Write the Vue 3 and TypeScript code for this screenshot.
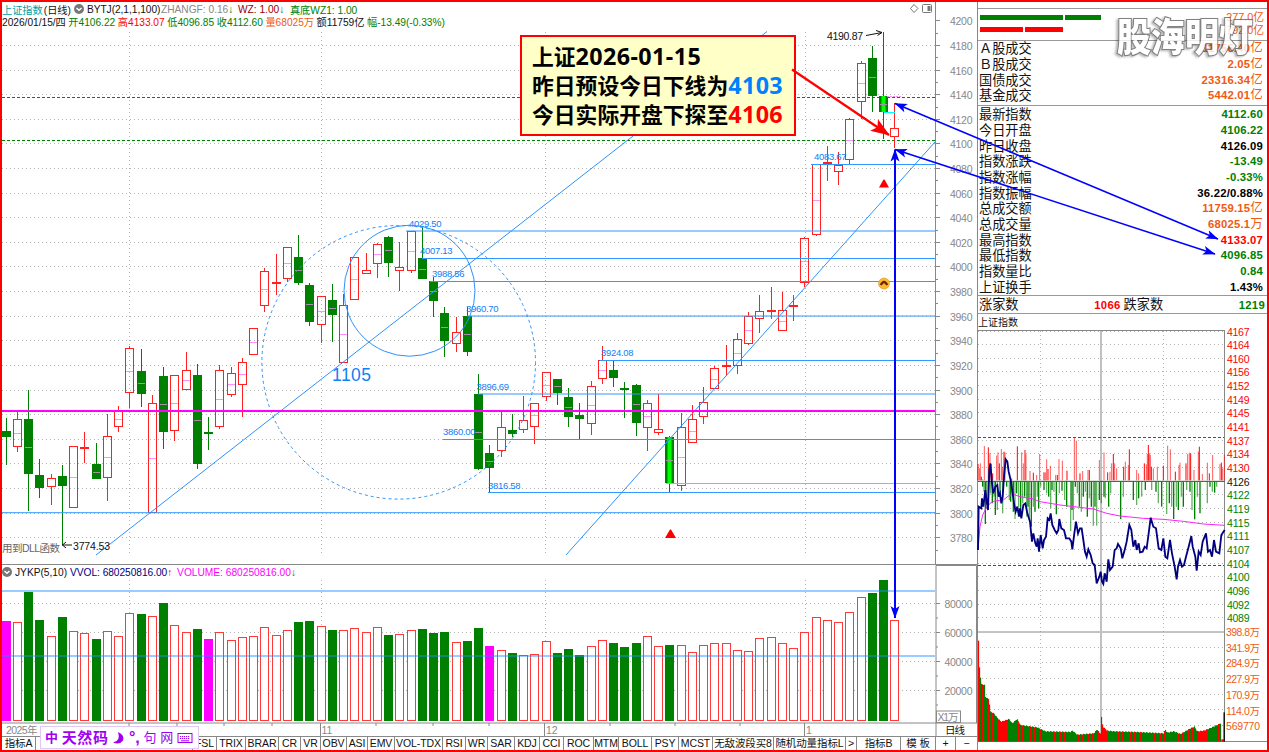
<template>
  <div class="terminal">
    <main class="left-pane">
      <header class="chart-head">
        <div class="head-line first">
          <span class="teal">上证指数</span>
          <span class="day">(日线)</span>
          <span class="round-btn"><svg viewBox="0 0 10 10"><path d="M2.5 4 5 6.3 7.5 4" /></svg></span>
          <span class="formula">BYTJ(2,1,1,100)</span>
          <span class="gray zf">ZHANGF: 0.16<b class="green">↓</b></span>
          <span class="wine wz">WZ: 1.00<b class="green">↓</b></span>
          <span class="green">真底WZ1: 1.00</span>
          <span class="head-icons">
            <svg width="22" height="12" viewBox="0 0 22 12">
              <path d="M4 1.5 8 5.5 4 9.5 0.5 5.5Z" />
              <rect x="12.5" y="1.5" width="9" height="8" rx="1" />
              <rect x="18" y="3.5" width="2" height="4" fill="#777" />
            </svg>
          </span>
        </div>
        <div class="head-line second">
          <span>2026/01/15/四</span>
          <span class="green">开4106.22</span>
          <span class="red">高4133.07</span>
          <span class="green">低4096.85</span>
          <span class="green">收4112.60</span>
          <span class="orange">量68025万</span>
          <span>额11759亿</span>
          <span class="green">幅-13.49(-0.33%)</span>
        </div>
      </header>

      <!-- K线主图 -->
      <svg class="k-chart" width="975" height="536" viewBox="2 28 975 536">
        <g class="grid">
          <line v-for="p in gridPrices.slice(1)" :key="p" x1="2" x2="935" :y1="priceY(p)" :y2="priceY(p)" />
          <line v-for="m in months" :key="m" :x1="m" :x2="m" y1="32" y2="556" />
        </g>
        <line x1="2" x2="935" y1="97.5" y2="97.5" class="dash purple-line" />
        <line x1="2" x2="935" y1="140.5" y2="140.5" class="dash green-line" />
        <g v-for="(c, i) in candles" :key="i" class="candle" :class="c[4]">
          <line :x1="cx(i)" :x2="cx(i)" :y1="c[0]" :y2="c[1]" />
          <line :x1="cx(i)" :x2="cx(i)" :y1="c[2]" :y2="c[3]" />
          <rect :x="cx(i) - 4" :y="Math.round(c[1]) + 0.5" width="8" :height="Math.max(1, Math.round(c[2] - c[1]) - 1)" />
          <rect
            v-if="c[4] === 'b'"
            class="bright"
            :x="cx(i) - 2"
            :y="c[1]"
            width="4"
            :height="c[2] - c[1]"
          />
          <line
            v-if="c[2] - c[1] > 13"
            class="mid"
            :x1="cx(i) - 3.5"
            :x2="cx(i) + 3.5"
            :y1="Math.round((c[1] + c[2]) / 2) + 0.5"
            :y2="Math.round((c[1] + c[2]) / 2) + 0.5"
          />
        </g>
        <line x1="666" x2="935" y1="483.5" y2="483.5" stroke="#b0b0b0" />
        <g class="level">
          <line v-for="l in levels" :key="l.y" :x1="l.from" x2="935" :y1="l.y" :y2="l.y" />
        </g>
        <g class="level-text">
          <text v-for="t in levelTexts" :key="t.s" :x="t.x" :y="t.y" textLength="32.5">{{ t.s }}</text>
          <text x="332" y="380.5" class="big" textLength="39">1105</text>
        </g>
        <g class="trend">
          <circle cx="409.5" cy="290.7" r="65.5" />
          <circle cx="398.7" cy="362.3" r="136.8" stroke-dasharray="3 3" />
          <line x1="96" y1="555" x2="767" y2="31.5" />
          <line x1="566" y1="555" x2="935" y2="142" />
        </g>
        <line x1="2" x2="935" y1="411" y2="411" stroke="#f0f" stroke-width="2" />
        <line x1="884" x2="895" y1="112.5" y2="112.5" stroke="#0ff" />
        <line x1="887" x2="901" y1="96.5" y2="96.5" stroke="#f8f" stroke-dasharray="2 1" />
        <path d="M665 538 670 529.5H671L676 538Z M879 187.5 883.5 179.5H884.5L889 187.5Z" fill="red" />
        <circle cx="884" cy="283.5" r="5.5" fill="#fdb92c" stroke="#e39419" stroke-width=".6" />
        <path d="M879.8 284.5Q884 277 888.2 284.5L886.5 285.5 884 283 881.5 285.5Z" fill="#6b2500" />
        <g class="mark-text">
          <text x="827" y="40" textLength="36">4190.87</text>
          <path d="M866 35.5 882 32.5M876 30.5 882 32.5 877.5 35.5" />
          <text x="73" y="549.5" textLength="37">3774.53</text>
          <path d="M72 545H62M66 542 62.5 545 66 548" />
          <text x="2" y="551.5" textLength="58" class="dll">用到DLL函数</text>
        </g>
        <g class="axis">
          <line x1="935.5" x2="935.5" y1="28" y2="564" />
          <template v-for="p in gridPrices" :key="p">
            <line x1="936" x2="940" :y1="priceY(p)" :y2="priceY(p)" />
            <line x1="936" x2="938" :y1="priceY(p - 10)" :y2="priceY(p - 10)" />
            <text x="950" :y="priceY(p) + 4" textLength="22.5">{{ p }}</text>
          </template>
        </g>
      </svg>

      <header class="vol-head">
        <span class="round-btn"><svg viewBox="0 0 10 10"><path d="M2.5 4 5 6.3 7.5 4" /></svg></span>
        <span>JYKP(5,10)</span>
        <span class="navy">VVOL: 680250816.00<b class="red">↑</b></span>
        <span class="magenta">VOLUME: 680250816.00<b class="green">↓</b></span>
      </header>

      <!-- 成交量 -->
      <svg class="vol-chart" width="975" height="157" viewBox="2 579 975 157">
        <g class="grid">
          <line v-for="y in [603.5, 632.5, 661.5, 690.5]" :key="y" x1="2" x2="935" :y1="y" :y2="y" />
          <line v-for="m in months" :key="m" :x1="m" :x2="m" y1="580" y2="720" />
        </g>
        <rect
          v-for="(v, i) in volumes"
          :key="i"
          class="vol"
          :class="v[1]"
          :x="cx(i) - 4"
          :y="Math.round(v[0]) + 0.5"
          width="8"
          :height="720 - Math.round(v[0])"
        />
        <line v-for="y in [591, 656]" :key="y" x1="2" x2="935" :y1="y" :y2="y" class="vol-level" />
        <g class="axis">
          <path d="M936 736V565.5H976.5V723" />
          <line x1="2" x2="977" y1="723" y2="723" />
          <template v-for="(n, i) in [80000, 60000, 40000, 20000]" :key="n">
            <line x1="936" x2="940" :y1="603.5 + i * 29" :y2="603.5 + i * 29" />
            <line x1="936" x2="938" :y1="618 + i * 29" :y2="618 + i * 29" />
            <text x="944.5" :y="607.5 + i * 29" textLength="28">{{ n }}</text>
          </template>
          <rect x="936.5" y="711" width="24" height="11.5" fill="none" />
          <text x="937.5" y="720.5" textLength="21">X1万</text>
          <line v-for="x in [129, 320.5, 544.5, 804.5]" :key="x" :x1="x" :x2="x" y1="723" y2="736" />
          <line v-for="x in [177, 224, 272, 376, 433, 489, 610, 675, 740]" :key="x" :x1="x" :x2="x" y1="723" y2="726" />
          <text x="6" y="733.5" textLength="31.5">2025年</text>
          <text x="131" y="733.5">10</text>
          <text x="321.5" y="733.5">11</text>
          <text x="546" y="733.5">12</text>
          <text x="806" y="733.5">1</text>
          <text x="945" y="733.5" textLength="20" fill="#111">日线</text>
        </g>
      </svg>

      <nav class="tabs">
        <span v-for="(t, i) in tabs" :key="i" :class="{ last: i === tabs.length - 1 }">{{ t }}</span>
      </nav>

      <div class="ime">
        <span>中</span>
        <span class="wide">天然码</span>
        <svg width="13" height="14" viewBox="0 0 13 14"><path d="M6 1Q13 4 11 9.5 8 14 1 11.5 9 10 6 1Z" /></svg>
        <span class="punct">°,</span>
        <span class="small">句</span>
        <span class="small">网</span>
        <svg width="16" height="12" viewBox="0 0 16 12">
          <rect x="1" y="1.5" width="14" height="9" fill="none" stroke="#a000f0" />
          <path d="M3 4.5H13M3 6.5H13" fill="none" stroke="#a000f0" stroke-dasharray="1.2 .8" />
          <path d="M4 8.8H12" stroke="#a000f0" />
        </svg>
      </div>
    </main>

    <aside class="quote">
      <div class="flow">
        <div class="flow-row">
          <i class="bar g1"></i><i class="bar g2"></i><span class="orange">277.0亿</span>
        </div>
        <div class="flow-row">
          <i class="bar r1"></i><i class="bar r2"></i><span class="orange">792.0亿</span>
        </div>
      </div>
      <div class="rows turnover">
        <div v-for="r in turnover" :key="r.label" class="row">
          <span>{{ r.label }}</span>
          <b class="orange">{{ r.value }}<em>亿</em></b>
        </div>
      </div>
      <div class="rows index">
        <div v-for="r in indexRows" :key="r.label" class="row">
          <span>{{ r.label }}</span>
          <b :class="r.color">{{ r.value }}<em v-if="r.unit">{{ r.unit }}</em></b>
        </div>
      </div>
      <div class="counts">
        <span>涨家数</span><b class="red">1066</b><span>跌家数</span><b class="green">1219</b>
      </div>
      <div class="mini-title">上证指数</div>

      <!-- 分时图 -->
      <svg class="mini" width="289" height="420" viewBox="978 330 289 420">
        <g class="grid">
          <line v-for="(p, i) in miniPrices" :key="p" x1="978" x2="1224" :y1="miniY(i)" :y2="miniY(i)" />
          <line v-for="y in [647, 662, 678, 694, 709, 725]" :key="y" x1="978" x2="1224" :y1="y + 0.5" :y2="y + 0.5" />
          <line x1="1040" x2="1040" y1="331" y2="741" />
          <line x1="1163.5" x2="1163.5" y1="331" y2="741" />
        </g>
        <g class="axis">
          <line x1="978" x2="1225" y1="330.5" y2="330.5" />
          <line x1="1224.5" x2="1224.5" y1="331" y2="742" />
          <line x1="978" x2="1225" y1="632" y2="632" />
          <line x1="978" x2="1267" y1="741.5" y2="741.5" />
        </g>
        <line x1="1101" x2="1101" y1="331" y2="741" stroke="#c0c0c0" stroke-width="2" />
        <line x1="978" x2="1224" y1="437.5" y2="437.5" class="dash purple-line" />
        <line x1="978" x2="1224" y1="565.5" y2="565.5" class="dash green-line" />
        <g transform="translate(970 320) scale(.33333)">
          <line
            v-for="(b, i) in upBars"
            :key="i"
            :x1="b[0]"
            :x2="b[0]"
            :y1="b[1]"
            y2="481"
            stroke="red"
            :stroke-opacity="i % 3 ? 0.65 : 1"
            stroke-width="3"
          />
          <line
            v-for="(b, i) in downBars"
            :key="i"
            :x1="b[0]"
            :x2="b[0]"
            y1="485"
            :y2="b[1]"
            stroke="green"
            :stroke-opacity="i % 2 ? 0.6 : 1"
            stroke-width="4"
          />
          <line x1="24" x2="764" y1="484" y2="484" stroke="#444" stroke-width="3" />
          <polyline class="avg" :points="avgLine" />
          <polyline class="price" :points="priceLine" />
        </g>
        <g transform="translate(970 570) scale(.33333)">
          <rect v-for="b in miniVolumes" :key="b.x" :x="b.x" :y="b.y" width="3.4" :height="515 - b.y" :fill="b.c" />
          <rect x="754" y="508" width="7" height="7" fill="red" />
          <rect x="760.5" y="427" width="4" height="88" fill="#000" />
        </g>
        <g class="mini-axis">
          <text
            v-for="(p, i) in miniPrices"
            :key="p"
            x="1227"
            :y="miniY(i) + 4"
            textLength="22.5"
            :class="i < 11 ? 'up' : i > 11 ? 'down' : 'flat'"
          >{{ p }}</text>
          <text
            v-for="(v, i) in ['398.8万', '341.9万', '284.9万', '227.9万', '170.9万', '114.0万', '569770']"
            :key="v"
            x="1226"
            :y="636 + i * 15.7"
            textLength="34"
            class="amt"
          >{{ v }}</text>
        </g>
      </svg>
      <div class="watermark">股海明灯</div>
    </aside>

    <div class="note">
      <div>上证<i>2026-01-15</i></div>
      <div>昨日预设今日下线为<i class="blue">4103</i></div>
      <div>今日实际开盘下探至<i class="red">4106</i></div>
    </div>

    <svg class="arrows" width="1269" height="752" viewBox="0 0 1269 752">
      <defs>
        <marker id="blueHead" markerUnits="userSpaceOnUse" markerWidth="14" markerHeight="10" refX="12" refY="5" orient="auto-start-reverse">
          <path d="M0 .5 12.5 5 0 9.5 3 5Z" fill="#00f" />
        </marker>
        <marker id="redHead" markerUnits="userSpaceOnUse" markerWidth="20" markerHeight="14" refX="18" refY="7" orient="auto">
          <path d="M0 0 19 7 0 14 4 7Z" fill="red" />
        </marker>
      </defs>
      <line x1="792" y1="69.5" x2="889" y2="135" stroke="red" stroke-width="2.2" marker-end="url(#redHead)" />
      <g stroke="#00f" stroke-width="1.6">
        <line x1="895" y1="103.5" x2="1218" y2="239" marker-start="url(#blueHead)" marker-end="url(#blueHead)" />
        <line x1="895" y1="149.5" x2="1215" y2="254" marker-start="url(#blueHead)" marker-end="url(#blueHead)" />
        <line x1="895" y1="149.5" x2="895" y2="618" stroke-width="2" marker-start="url(#blueHead)" marker-end="url(#blueHead)" />
      </g>
    </svg>
  </div>
</template>

<script setup lang="ts">
type Candle = [number, number, number, number, string]

const gridPrices = Array.from({ length: 22 }, (_, i) => 4200 - i * 20)
const months = [129.5, 321.5, 545.5, 805.5]

const cx = (i: number) => Math.floor(6 + i * 11.253) + 0.5
const priceY = (p: number) => Math.floor(45.5 + (4180 - p) * 1.2305) + 0.5

// 最高, 实体上沿, 实体下沿, 最低, 颜色 (r 阳线, g 阴线, b 高亮阴线)
const candles: Candle[] = [
  [418, 431, 437, 465, 'g'], [412, 419, 447, 452, 'r'], [390, 419, 474, 511, 'g'], [459, 475, 488, 498, 'g'],
  [474, 478, 487, 505, 'r'], [465, 476, 486, 545, 'g'], [446, 446, 508, 508, 'r'], [432, 447, 449, 463, 'r'],
  [443, 464, 479, 479, 'g'], [414, 436, 478, 501, 'r'], [406, 411, 427, 432, 'r'], [346, 348, 393, 408, 'r'],
  [349, 371, 394, 407, 'g'], [395, 403, 513, 513, 'r'], [367, 376, 432, 449, 'g'], [375, 375, 431, 441, 'r'],
  [352, 370, 390, 390, 'r'], [364, 375, 464, 469, 'g'], [417, 432, 434, 450, 'g'], [365, 370, 427, 429, 'r'],
  [367, 373, 395, 397, 'r'], [358, 362, 385, 417, 'r'], [328, 328, 355, 355, 'r'], [268, 271, 306, 312, 'r'],
  [254, 282, 284, 295, 'r'], [247, 247, 279, 282, 'r'], [235, 257, 283, 285, 'g'], [283, 285, 322, 326, 'g'],
  [296, 296, 325, 343, 'r'], [284, 300, 315, 342, 'g'], [294, 305, 363, 363, 'r'], [257, 257, 300, 300, 'r'],
  [253, 270, 274, 274, 'r'], [243, 244, 264, 278, 'r'], [236, 237, 263, 277, 'g'], [242, 267, 271, 291, 'r'],
  [231, 231, 271, 273, 'r'], [226, 258, 279, 279, 'g'], [277, 281, 301, 317, 'g'], [307, 313, 341, 357, 'g'],
  [317, 332, 344, 352, 'r'], [307, 316, 352, 356, 'g'], [374, 394, 469, 470, 'g'], [445, 453, 468, 493, 'g'],
  [412, 427, 451, 457, 'r'], [414, 430, 434, 437, 'g'], [396, 420, 430, 433, 'r'], [403, 403, 427, 444, 'r'],
  [372, 372, 397, 401, 'r'], [379, 379, 393, 405, 'g'], [388, 397, 417, 427, 'g'], [403, 415, 419, 439, 'g'],
  [381, 386, 424, 435, 'r'], [346, 360, 379, 384, 'r'], [360, 370, 378, 387, 'g'], [382, 388, 389, 418, 'g'],
  [384, 385, 423, 436, 'g'], [400, 403, 428, 451, 'r'], [394, 429, 433, 435, 'r'], [436, 437, 483, 492, 'b'],
  [413, 427, 486, 491, 'r'], [405, 419, 443, 443, 'r'], [387, 402, 417, 424, 'r'], [366, 368, 389, 389, 'r'],
  [345, 365, 367, 376, 'r'], [333, 339, 366, 374, 'r'], [312, 316, 344, 345, 'r'], [295, 311, 319, 333, 'r'],
  [287, 310, 311, 319, 'r'], [292, 310, 331, 331, 'r'], [295, 305, 306, 321, 'r'], [237, 238, 283, 287, 'r'],
  [164, 164, 235, 236, 'r'], [146, 162, 164, 181, 'r'], [152, 165, 172, 185, 'r'], [118, 119, 160, 164, 'r'],
  [61, 63, 102, 119, 'r'], [46, 58, 96, 112, 'g'], [32, 96, 112, 139, 'b'], [103, 128, 137, 148, 'r'],
]

const volumeTops = [
  621, 622, 592, 620, 636, 617, 631, 633, 639, 631, 636, 613, 614, 616, 603, 625, 632, 629, 639, 632,
  640, 637, 636, 627, 635, 630, 622, 621, 626, 630, 630, 628, 632, 627, 635, 634, 630, 629, 633, 632,
  642, 641, 628, 646, 650, 653, 655, 654, 641, 653, 649, 655, 646, 640, 643, 647, 643, 636, 646, 645,
  645, 652, 645, 643, 643, 650, 651, 638, 637, 643, 648, 632, 617, 620, 622, 612, 597, 593, 580, 620,
]
const volumeKinds = 'mrggrgrrgrrrgrgrrgmrrrrrrrggrgrrrrgrrggg' + 'rggmrgrrrgggrrgggrrgrrrrrrrrrrrrrrrrrggr'
const volumes = volumeTops.map((y, i) => [y, volumeKinds[i]] as [number, string])

const levels = [
  { from: 811, y: 164.5 }, { from: 406, y: 231 }, { from: 422, y: 258.5 }, { from: 430, y: 281.5 },
  { from: 467, y: 316 }, { from: 600, y: 360.5 }, { from: 478, y: 394 }, { from: 443, y: 439.5 },
  { from: 488, y: 492.5 }, { from: 2, y: 512.7 },
]
const levelTexts = [
  { s: '4083.67', x: 814, y: 160 }, { s: '4029.50', x: 409, y: 226.5 }, { s: '4007.13', x: 420, y: 254 },
  { s: '3988.56', x: 432, y: 277 }, { s: '3960.70', x: 466, y: 311.5 }, { s: '3924.08', x: 601, y: 356 },
  { s: '3896.69', x: 476.5, y: 390 }, { s: '3860.00', x: 443, y: 435 }, { s: '3816.58', x: 488, y: 488.5 },
]

const tabs = [
  '指标A', '', 'FSL', 'TRIX', 'BRAR', 'CR', 'VR', 'OBV', 'ASI', 'EMV', 'VOL-TDX', 'RSI', 'WR', 'SAR', 'KDJ',
  'CCI', 'ROC', 'MTM', 'BOLL', 'PSY', 'MCST', '无敌波段买8', '随机动量指标L', '>', '指标B', '模 板', '+', '−',
]

const turnover = [
  { label: 'Ａ股成交', value: '11756.40' },
  { label: 'Ｂ股成交', value: '2.05' },
  { label: '国债成交', value: '23316.34' },
  { label: '基金成交', value: '5442.01' },
]
const indexRows = [
  { label: '最新指数', value: '4112.60', color: 'green' },
  { label: '今日开盘', value: '4106.22', color: 'green' },
  { label: '昨日收盘', value: '4126.09', color: 'black' },
  { label: '指数涨跌', value: '-13.49', color: 'green' },
  { label: '指数涨幅', value: '-0.33%', color: 'green' },
  { label: '指数振幅', value: '36.22/0.88%', color: 'black' },
  { label: '总成交额', value: '11759.15', unit: '亿', color: 'orange' },
  { label: '总成交量', value: '68025.1', unit: '万', color: 'orange' },
  { label: '最高指数', value: '4133.07', color: 'red' },
  { label: '最低指数', value: '4096.85', color: 'green' },
  { label: '指数量比', value: '0.84', color: 'green' },
  { label: '上证换手', value: '1.43%', color: 'black' },
]

const miniPrices = [
  4167, 4164, 4160, 4156, 4152, 4149, 4145, 4141, 4137, 4134, 4130, 4126, 4122, 4119, 4115, 4111, 4107, 4104,
  4100, 4096, 4092, 4089,
]
const miniY = (i: number) => Math.floor(331 + i * 13.66) + 0.5

const parse = (s: string) => s.split(' ').map((p) => p.split(',').map(Number))

const upBars = parse(
  '24,432 28,445 31,430 34,470 38,478 43,378 55,382 60,400 64,432 68,460 80,407 84,397 88,430 94,387 97,440 102,395 105,397 125,475 142,379 155,397 160,430 165,390 168,403 180,453 190,458 200,465 209,402 222,457 226,457 230,418 234,447 241,437 257,465 262,465 267,417 277,422 291,452 313,354 319,362 330,460 338,453 354,450 358,450 388,420 402,397 413,457 420,455 425,430 430,402 434,430 440,445 461,440 466,425 475,435 478,388 500,450 506,460 523,430 529,433 532,402 535,375 538,400 541,405 544,440 550,445 562,440 580,437 593,377 601,388 616,455 627,435 630,428 648,430 653,402 658,398 662,400 672,450 685,395 688,380 697,462 712,428 718,460 728,405 750,432 754,428 758,445 763,405',
)
const downBars = parse(
  '38,500 42,515 46,612 50,540 55,560 62,520 67,550 72,530 76,585 82,570 90,520 98,580 110,500 118,540 122,545 126,520 130,575 135,597 140,520 146,560 152,590 158,550 164,530 170,590 174,560 178,595 184,620 190,560 195,575 202,530 206,565 212,500 222,510 230,520 236,530 242,565 246,510 252,515 259,583 268,520 276,512 284,540 290,560 302,633 306,570 310,600 316,500 322,520 328,560 334,575 340,530 346,515 352,590 358,535 364,560 370,617 375,560 380,617 388,540 394,550 402,530 406,535 416,560 422,520 452,597 460,530 490,540 500,555 506,535 515,530 526,510 545,510 558,515 565,550 575,560 590,582 598,550 605,560 611,597 619,560 625,570 634,530 640,560 650,510 660,515 666,570 674,598 682,530 690,580 712,550 720,500 727,515 734,518 740,500',
)
const avgLine =
  '24,690 30,620 38,585 48,565 60,550 75,543 100,540 115,528 130,523 150,530 190,537 210,545 270,555 320,561 370,567 410,580 450,588 520,595 580,598 640,604 700,612 764,616'
const priceLine =
  '24,690 26,560 34,565 36,535 40,560 46,510 50,545 54,570 58,450 61,430 66,490 70,520 76,500 82,495 86,530 90,520 94,550 98,530 102,470 107,418 112,425 116,455 122,480 128,520 132,550 137,575 142,560 147,590 150,565 154,595 160,555 166,550 172,580 180,605 186,665 190,640 196,670 200,680 203,655 207,695 212,645 218,685 222,660 228,650 233,595 238,600 242,580 247,615 254,630 260,640 265,630 268,597 274,625 282,630 288,655 298,655 304,665 307,688 313,640 318,605 324,640 330,625 335,625 340,660 345,695 350,710 355,688 362,705 368,730 374,735 380,790 388,770 392,755 396,785 400,792 404,760 410,785 415,718 420,750 428,740 434,690 440,685 444,672 452,685 457,715 464,690 470,665 478,615 484,630 490,680 496,660 500,690 506,670 510,697 518,695 524,680 530,685 536,640 542,593 550,620 558,625 566,685 574,690 580,655 586,710 592,715 600,660 606,700 614,740 620,778 624,740 630,720 636,740 642,735 648,710 656,680 664,648 668,680 676,710 680,752 686,695 692,705 698,665 708,640 714,695 720,690 726,710 732,660 738,695 748,700 754,645 764,630'

const envelope = parse(
  '24,213 27,292 32,342 42,345 44,380 55,388 60,425 70,430 80,443 92,455 116,447 125,460 140,447 150,465 170,468 200,472 225,484 300,486 306,482 320,494 370,490 380,478 388,490 391,490 393,442 397,470 410,482 430,484 500,486 580,490 584,478 590,488 610,484 630,492 660,475 672,470 680,484 700,482 720,474 740,465 754,458',
)
const runs = 'rrggrrgrgrrrgrrggrgrrgrgrrrrrrgggrggggggrrgrrggrggggrggrrgggggrggrgggrgrgggrrggggrrgggrrgrgggrgggrgg'
const miniVolumes = Array.from({ length: 243 }, (_, n) => {
  const x = 24 + n * 3
  let k = envelope.findIndex((p) => p[0] > x)
  if (k < 1) k = envelope.length - 1
  const [x0, y0] = envelope[k - 1]
  const [x1, y1] = envelope[k]
  const y = y0 + ((x - x0) / (x1 - x0)) * (y1 - y0) + ((n * 7) % 3) - 1
  return { x, y, c: runs[n % runs.length] === 'r' ? 'red' : 'green' }
})
</script>

<style>
body {
  margin: 0;
  overflow: hidden;
}
</style>

<style scoped>
.terminal {
  position: relative;
  display: flex;
  width: 1269px;
  height: 752px;
  box-sizing: border-box;
  border: 2px solid #f00;
  background: #fff;
  color: #111;
  font-family: 'Liberation Sans', 'Noto Sans CJK SC', sans-serif;
  font-size: 10.5px;
  overflow: hidden;
}
svg {
  display: block;
}
.left-pane {
  position: relative;
  width: 975px;
  height: 748px;
  flex: none;
}
.k-chart,
.vol-chart,
.mini {
  overflow: visible;
}
.chart-head {
  height: 26px;
  width: 934px;
  box-sizing: border-box;
  border-right: 1px solid #888;
  font-size: 10.2px;
}
.head-line {
  display: flex;
  align-items: center;
  height: 12px;
  white-space: nowrap;
}
.first {
  height: 14px;
}
.second {
  height: 11px;
  gap: 2.6px;
  letter-spacing: -0.02px;
}
.first .day {
  margin-left: 1px;
}
.first .round-btn {
  margin-left: 3px;
}
.formula {
  margin-left: 3px;
  width: 74px;
  letter-spacing: -0.05px;
}
.zf {
  width: 77px;
}
.wz {
  width: 52px;
}
.head-icons {
  margin-left: auto;
  margin-right: 3px;
}
.head-icons path,
.head-icons rect {
  stroke: #777;
}
.head-icons path,
.head-icons rect:first-of-type {
  fill: none;
}
.round-btn {
  width: 10px;
  height: 10px;
  border-radius: 50%;
  background: #777;
}
.round-btn path {
  fill: none;
  stroke: #fff;
  stroke-width: 1.4;
}
.red {
  color: #f00;
}
.green {
  color: #008000;
}
.teal {
  color: #00a0a8;
}
.gray {
  color: #888;
}
.wine {
  color: #900;
}
.navy {
  color: #000080;
}
.magenta {
  color: #f0f;
}
.orange {
  color: #f05a14;
}
.blue {
  color: #0080ff;
}
.black {
  color: #000;
}
.grid line {
  stroke: #b4b4b4;
  stroke-dasharray: 1 3;
  shape-rendering: crispEdges;
}
.dash {
  stroke-dasharray: 3 2;
  shape-rendering: crispEdges;
}
.purple-line {
  stroke: #c000c0;
}
.green-line {
  stroke: #008000;
}
.candle line,
.candle rect {
  stroke-width: 1;
}
.candle.r {
  stroke: #ff2020;
  fill: none;
}
.candle.g,
.candle.b {
  stroke: #008000;
  fill: #008000;
}
.candle .bright {
  stroke: none;
  fill: #00ff00;
}
.candle .mid {
  stroke: #ff90ff;
}
.candle.g .mid,
.candle.b .mid {
  stroke: #a890a8;
}
.level line {
  stroke: #3098ff;
}
.level-text {
  fill: #1080f8;
  font-size: 9.5px;
}
.level-text .big {
  font-size: 17.5px;
}
.trend circle,
.trend line {
  fill: none;
  stroke: #2c92ff;
}
.mark-text {
  fill: #111;
  font-size: 10.5px;
}
.mark-text path {
  fill: none;
  stroke: #111;
}
.mark-text .dll {
  fill: #666;
}
.axis line,
.axis rect,
.axis path {
  fill: none;
  stroke: #888;
}
.axis text {
  fill: #888;
  font-size: 10.5px;
}
.axis text[fill] {
  fill: #111;
}
.vol-head {
  display: flex;
  align-items: center;
  height: 15px;
  box-sizing: border-box;
  border-top: 1px solid #888;
  font-size: 10.2px;
  white-space: nowrap;
}
.vol-head .round-btn {
  margin: 0 3px 0 0;
}
.vol-head .navy {
  margin-left: 3px;
  width: 107px;
  letter-spacing: -0.05px;
}
.vol {
  stroke-width: 1;
}
.vol.r {
  fill: #fff;
  stroke: #ff3838;
}
.vol.g {
  fill: #008000;
  stroke: #008000;
}
.vol.m {
  fill: #f0f;
  stroke: #f0f;
}
.vol-level {
  stroke: #1e8cff;
  stroke-opacity: 0.6;
  stroke-width: 1.6;
}
.tabs {
  display: grid;
  grid-template-columns:
    34px 157px 24px 29px 33px 22px 20px 26px 21px 27px 48px 23px 22px 27px 25px 24px 30px 25px 33px
    27px 34px 61px 72px 11px 44px 35px 20px 21px;
  height: 14px;
  box-sizing: border-box;
  border-top: 1px solid #888;
  line-height: 13px;
  color: #111;
}
.tabs span {
  box-sizing: border-box;
  border-right: 1px solid #888;
  text-align: center;
  white-space: nowrap;
  overflow: hidden;
  letter-spacing: -0.1px;
}
.tabs .last {
  border-right: 0;
}
.ime {
  position: absolute;
  left: 38px;
  top: 724px;
  width: 159px;
  height: 23px;
  box-sizing: border-box;
  border: 1px solid #e0c8f4;
  background: #fff;
  display: flex;
  align-items: center;
  justify-content: space-between;
  padding: 0 5px 0 4px;
  color: #a000f0;
  fill: #a000f0;
  font-size: 13px;
  font-weight: bold;
  line-height: 20px;
  white-space: nowrap;
}
.ime .wide {
  font-size: 15px;
  letter-spacing: 0.6px;
}
.ime .punct {
  font-size: 16px;
}
.ime .small {
  font-weight: normal;
}
.quote {
  position: relative;
  width: 290px;
  flex: none;
  box-sizing: border-box;
  border-left: 1px solid #888;
}
.flow {
  height: 39px;
  box-sizing: border-box;
  padding-top: 9px;
  border-bottom: 1px solid #999;
  background: linear-gradient(#999, #999) 0 6px / 100% 1px no-repeat;
}
.flow-row {
  display: flex;
  align-items: center;
  height: 12.5px;
}
.flow-row .orange {
  margin-left: auto;
  margin-right: 3px;
  font-size: 10.8px;
  line-height: 12px;
}
.bar {
  height: 5px;
  margin-left: 2px;
}
.g1 {
  width: 83px;
  background: #008000;
}
.g2 {
  width: 36px;
  background: #008000;
}
.r1 {
  width: 43px;
  background: #f00;
}
.r2 {
  width: 38px;
  background: #f00;
}
.rows {
  box-sizing: border-box;
  border-bottom: 1px solid #999;
}
.turnover {
  height: 65px;
}
.index {
  height: 190px;
  padding-top: 1px;
}
.row {
  display: flex;
  justify-content: space-between;
  align-items: center;
  height: 15.67px;
  padding: 0 4px 0 1px;
  font-size: 13.2px;
  line-height: 15px;
}
.row b {
  font-size: 11.3px;
  letter-spacing: 0.2px;
}
.row em {
  font-style: normal;
  font-weight: normal;
  font-size: 12.5px;
}
.counts {
  display: flex;
  align-items: center;
  height: 18px;
  box-sizing: border-box;
  border-bottom: 1px solid #999;
  padding: 0 2px 0 1px;
  font-size: 13.2px;
  line-height: 16px;
  white-space: nowrap;
}
.counts b {
  font-size: 11.3px;
  letter-spacing: 0.3px;
}
.counts b:first-of-type {
  width: 102px;
  text-align: right;
  margin-right: 3px;
}
.counts b:last-of-type {
  margin-left: auto;
}
.mini-title {
  height: 16px;
  line-height: 17px;
  font-size: 10px;
}
.avg {
  fill: none;
  stroke: #ff20ff;
  stroke-width: 3;
}
.price {
  fill: none;
  stroke: #000080;
  stroke-width: 5.5;
}
.mini-axis {
  font-size: 10.5px;
}
.up {
  fill: #f00;
}
.down {
  fill: #008000;
}
.flat {
  fill: #111;
}
.amt {
  fill: #f05a14;
}
.watermark {
  position: absolute;
  left: 139px;
  top: 8px;
  font-family: 'Noto Sans CJK SC', sans-serif;
  font-size: 34px;
  line-height: 50px;
  font-weight: 900;
  color: #fff;
  -webkit-text-stroke: 2px #666;
  paint-order: stroke fill;
  opacity: 0.82;
  transform: scaleY(1.12);
  filter: drop-shadow(-2px 1px 1px rgba(0, 0, 0, 0.35));
}
.note {
  position: absolute;
  left: 518px;
  top: 33px;
  width: 276px;
  height: 101px;
  box-sizing: border-box;
  border: 2px solid #f00;
  background: #ffffc8;
  padding: 4px 0 0 10px;
  font-family: 'Noto Sans CJK SC', sans-serif;
  font-size: 21.8px;
  font-weight: bold;
  line-height: 29px;
  color: #000;
  white-space: nowrap;
}
.note div {
  height: 29px;
}
.note i {
  font-family: 'Noto Sans', sans-serif;
  font-style: normal;
  font-size: 23.3px;
  letter-spacing: 0.4px;
}
.arrows {
  position: absolute;
  left: -2px;
  top: -2px;
  pointer-events: none;
}
</style>
